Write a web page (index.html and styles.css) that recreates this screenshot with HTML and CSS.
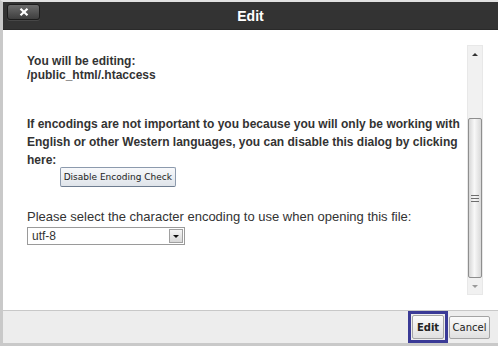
FILE: index.html
```html
<!DOCTYPE html>
<html lang="en">
<head>
    <meta charset="UTF-8">
    <title>Edit</title>
    <link rel="stylesheet" href="styles.css">
</head>
<body>
    <div class="dialog">
        <div class="titlebar">
            <button class="close" title="Close">
                <svg width="10" height="8" viewBox="0 0 10 8"><path d="M1.5 0.8 L8.5 7.2 M8.5 0.8 L1.5 7.2" stroke="#fff" stroke-width="2.2" fill="none"/></svg>
            </button>
            <h1 class="title">Edit</h1>
        </div>
        <div class="content">
            <div class="text">
                <div class="file-info">
                    You will be editing:<br>
                    /public_html/.htaccess
                </div>
                <div class="notice">
                    If encodings are not important to you because you will only be working with English or other Western languages, you can disable this dialog by clicking here: <button class="disable-btn">Disable Encoding Check</button>
                </div>
                <div class="select-label">Please select the character encoding to use when opening this file:</div>
                <div class="select">
                    <span>utf-8</span>
                    <span class="select-arrow"></span>
                </div>
            </div>
            <div class="scrollbar">
                <div class="sb-up"><span class="tri-up"></span></div>
                <div class="sb-track">
                    <div class="sb-thumb">
                        <span class="grip"></span>
                    </div>
                </div>
                <div class="sb-down"><span class="tri-down"></span></div>
            </div>
        </div>
        <div class="footer">
            <div class="focus-ring">
                <button class="btn btn-edit">Edit</button>
            </div>
            <button class="btn btn-cancel">Cancel</button>
        </div>
    </div>
</body>
</html>
```

FILE: styles.css
```css
body {
    margin: 0;
    width: 498px;
    height: 346px;
    overflow: hidden;
    font-family: "Liberation Sans", Arial, sans-serif;
    background-color: #e2e2e2;
    color: #333;
}
.dialog {
    height: 341px;
    border-top: 2px solid #e2e2e2;
    border-left: 3px solid #c9c9c9;
    border-bottom: 3px solid #c9c9c9;
    background-color: #fff;
    display: flex;
    flex-direction: column;
}
.titlebar {
    height: 28px;
    box-sizing: border-box;
    border-bottom: 1px solid #2a2a2a;
    background-color: #333;
    display: grid;
    grid-template-columns: 1fr auto 1fr;
    align-items: center;
}
.close {
    justify-self: start;
    align-self: start;
    margin: 2px 0 0 4px;
    width: 33px;
    height: 16px;
    padding: 0;
    border: 1px solid #1c1c1c;
    border-radius: 3px;
    background: linear-gradient(#6c6c6c, #3e3e3e);
    box-shadow: 0 1px 0 #474747;
    display: flex;
    align-items: center;
    justify-content: center;
}
.title {
    margin: 0;
    font-size: 14px;
    font-weight: bold;
    color: #fff;
}
.content {
    height: 280px;
    box-sizing: border-box;
    padding: 15px 15px 15px 24px;
    display: flex;
    gap: 3px;
}
.text {
    flex: 1;
    padding-top: 9px;
    font-size: 12px;
    font-weight: bold;
}
.file-info {
    line-height: 14px;
}
.notice {
    margin-top: 33px;
    line-height: 18px;
}
.disable-btn {
    vertical-align: top;
    margin-top: 16px;
    height: 20px;
    padding: 0 3px;
    white-space: nowrap;
    font-family: "DejaVu Sans", Tahoma, sans-serif;
    font-size: 9px;
    color: #222;
    border: 1px solid #8c9aad;
    border-bottom-color: #6f7d90;
    border-radius: 2px;
    background: linear-gradient(#f8f9fb, #dfe4ea);
}
.select-label {
    margin-top: 22px;
    font-size: 13px;
    font-weight: normal;
    line-height: 16px;
}
.select {
    margin-top: 2px;
    width: 158px;
    height: 18px;
    box-sizing: border-box;
    border: 1px solid #9a9a9a;
    padding-left: 4px;
    display: flex;
    align-items: center;
    justify-content: space-between;
    font-size: 12px;
    font-weight: normal;
}
.select-arrow {
    width: 14px;
    height: 14px;
    box-sizing: border-box;
    margin-right: 1px;
    border: 1px solid #a0a0a0;
    background: linear-gradient(#f6f6f6, #d8d8d8);
    display: flex;
    align-items: center;
    justify-content: center;
}
.select-arrow::after {
    content: "";
    border-left: 3px solid transparent;
    border-right: 3px solid transparent;
    border-top: 3px solid #111;
}
.scrollbar {
    width: 16px;
    box-sizing: border-box;
    border: 1px solid #e8e8e8;
    background-color: #f1f1f1;
    display: flex;
    flex-direction: column;
}
.sb-up {
    height: 17px;
    display: flex;
    align-items: center;
    justify-content: center;
}
.sb-down {
    height: 16px;
    display: flex;
    align-items: center;
    justify-content: center;
}
.tri-up {
    border-left: 3px solid transparent;
    border-right: 3px solid transparent;
    border-bottom: 3px solid #333;
}
.tri-down {
    border-left: 3px solid transparent;
    border-right: 3px solid transparent;
    border-top: 3px solid #9a9a9a;
}
.sb-track {
    flex: 1;
    display: flex;
    flex-direction: column;
}
.sb-thumb {
    margin-top: 55px;
    height: 160px;
    box-sizing: border-box;
    border: 1px solid #8e8e8e;
    border-radius: 2px;
    background: linear-gradient(to right, #d6d6d6, #f8f8f8 45%, #d9d9d9);
    display: flex;
    align-items: center;
    justify-content: center;
}
.grip {
    width: 8px;
    height: 7px;
    background: repeating-linear-gradient(#6e6e6e 0 1px, transparent 1px 3px);
}
.footer {
    height: 33px;
    box-sizing: border-box;
    border-top: 1px solid #c8c8c8;
    background-color: #ededed;
    padding-right: 8px;
    display: flex;
    justify-content: flex-end;
    align-items: center;
    gap: 1px;
}
.focus-ring {
    border: 3px solid #3a3a96;
    padding: 1px;
    display: flex;
}
.btn {
    height: 24px;
    padding: 0;
    font-family: "DejaVu Sans", Tahoma, sans-serif;
    font-size: 10px;
    color: #222;
    border: 1px solid #a4a4a4;
    border-radius: 2px;
    background: linear-gradient(#fbfbfb, #e0e0e0);
}
.btn-edit {
    width: 32px;
    font-weight: bold;
}
.btn-cancel {
    width: 41px;
    height: 23px;
}
```
